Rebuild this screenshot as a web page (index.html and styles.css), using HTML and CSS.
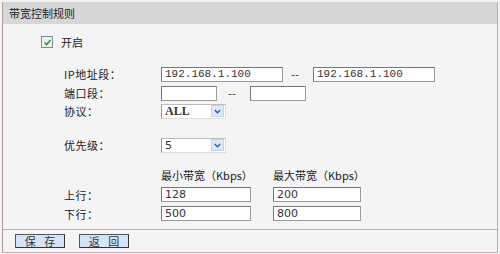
FILE: index.html
```html
<!DOCTYPE html>
<html lang="zh-CN">
  <head>
    <meta charset="UTF-8" />
    <title>带宽控制规则</title>
    <link rel="stylesheet" href="styles.css">
  </head>
  <body>
    <div class="panel">
      <div class="panel-title">带宽控制规则</div>

      <div class="panel-body">
        <div class="enable-row">
          <span class="checkbox">
            <svg width="9" height="9" viewBox="0 0 9 9">
              <path d="M1.5 4.5 L3.6 6.6 L7.6 2" fill="none" stroke="#2f9a2f" stroke-width="1.6" />
            </svg>
          </span>
          <span>开启</span>
        </div>

        <div class="row row-ip">
          <label class="label">IP地址段：</label>
          <input class="input input-ip" type="text" value="192.168.1.100" />
          <span class="dash dash-ip">--</span>
          <input class="input input-ip" type="text" value="192.168.1.100" />
        </div>

        <div class="row row-port">
          <label class="label">端口段：</label>
          <input class="input input-port" type="text" value="" />
          <span class="dash dash-port">--</span>
          <input class="input input-port" type="text" value="" />
        </div>

        <div class="row row-proto">
          <label class="label">协议：</label>
          <div class="select select-bold">
            <span>ALL</span>
            <span class="select-arrow">
              <svg width="7" height="5" viewBox="0 0 7 5">
                <path d="M0.8 1 L3.5 3.8 L6.2 1" fill="none" stroke="#2d5fa8" stroke-width="1.4" />
              </svg>
            </span>
          </div>
        </div>

        <div class="row row-priority">
          <label class="label">优先级：</label>
          <div class="select">
            <span>5</span>
            <span class="select-arrow">
              <svg width="7" height="5" viewBox="0 0 7 5">
                <path d="M0.8 1 L3.5 3.8 L6.2 1" fill="none" stroke="#2d5fa8" stroke-width="1.4" />
              </svg>
            </span>
          </div>
        </div>

        <div class="row row-head">
          <span class="label"></span>
          <span class="col-min">最小带宽（Kbps）</span>
          <span>最大带宽（Kbps）</span>
        </div>

        <div class="row row-bw">
          <label class="label">上行：</label>
          <input class="input input-min" type="text" value="128" />
          <input class="input input-max" type="text" value="200" />
        </div>

        <div class="row row-bw">
          <label class="label">下行：</label>
          <input class="input input-min" type="text" value="500" />
          <input class="input input-max" type="text" value="800" />
        </div>
      </div>

      <div class="panel-footer">
        <button type="button" class="btn">保 存</button>
        <button type="button" class="btn">返 回</button>
      </div>
    </div>
  </body>
</html>
```
FILE: styles.css
```css
* {
  margin: 0;
  padding: 0;
  box-sizing: border-box;
}

body {
  font-family: "Noto Sans CJK SC", "DejaVu Sans", sans-serif;
  font-size: 11px;
  color: #222;
  background: #f4f4f4;
  width: 500px;
  height: 254px;
  padding: 2px 2px 0 2px;
}

.panel {
  width: 496px;
  border-left: 1px solid #b39a9a;
  border-right: 1px solid #c7a8a8;
  border-bottom: 1px solid #d5aaaa;
  background: #f4f4f4;
}

.panel-title {
  height: 22px;
  line-height: 22px;
  padding-left: 6px;
  background: #d7d7d7;
  color: #222;
  font-size: 11px;
}

.panel-body {
  height: 206px;
  padding-top: 8px;
  border-bottom: 1px solid #d5a8a8;
}

.enable-row {
  display: flex;
  align-items: center;
  height: 20px;
  padding-left: 38px;
  gap: 8px;
  margin-bottom: 12px;
}

.checkbox {
  display: flex;
  align-items: center;
  justify-content: center;
  width: 12px;
  height: 12px;
  border: 1px solid #7b8b9b;
  background: #eef2ee;
}

.row {
  display: flex;
  align-items: center;
  padding-left: 61px;
}

.row-ip {
  height: 20px;
}

.row-port,
.row-proto {
  height: 18px;
}

.row-priority {
  height: 20px;
  margin-top: 15px;
}

.row-head {
  height: 20px;
  margin-top: 10px;
}

.row-bw {
  height: 19px;
}

.label {
  width: 97px;
  flex-shrink: 0;
  letter-spacing: 0.5px;
}

.input {
  height: 15px;
  border: 1px solid #777;
  border-right-color: #999;
  border-bottom-color: #999;
  background: #fff;
  padding: 0 3px;
  font-family: "DejaVu Sans", sans-serif;
  font-size: 11px;
  color: #333;
  outline: none;
}

.input-ip {
  width: 122px;
  font-family: "Liberation Mono", monospace;
  font-size: 11px;
}

.dash {
  color: #444;
  font-family: "DejaVu Sans", sans-serif;
}

.dash-ip {
  width: 30px;
  padding-left: 8px;
}

.input-port {
  width: 56px;
}

.dash-port {
  width: 33px;
  padding-left: 11px;
}

.select {
  display: flex;
  align-items: center;
  justify-content: space-between;
  width: 65px;
  height: 15px;
  border: 1px solid #ddd;
  border-left-color: #999;
  border-top-color: #bbb;
  background: #fff;
  padding-left: 3px;
  font-family: "DejaVu Sans", sans-serif;
  color: #333;
}

.select-bold {
  font-family: "Liberation Serif", serif;
  font-weight: bold;
  font-size: 12px;
}

.select-arrow {
  display: flex;
  align-items: center;
  justify-content: center;
  width: 13px;
  height: 12px;
  margin-right: 1px;
  background: #dce8f8;
  border: 1px solid #c2d4ec;
}

.col-min {
  width: 112px;
}

.input-min {
  width: 90px;
  margin-right: 22px;
}

.input-max {
  width: 88px;
}

.panel-footer {
  display: flex;
  align-items: center;
  gap: 14px;
  height: 22px;
  padding-left: 12px;
}

.btn {
  width: 50px;
  height: 14px;
  border: 1px solid #555;
  border-right-color: #333;
  border-bottom-color: #333;
  background: #d2e5f8;
  font-family: "Noto Sans CJK SC", sans-serif;
  font-size: 11px;
  line-height: 12px;
  letter-spacing: 3px;
  text-indent: 3px;
  color: #333;
}
```
